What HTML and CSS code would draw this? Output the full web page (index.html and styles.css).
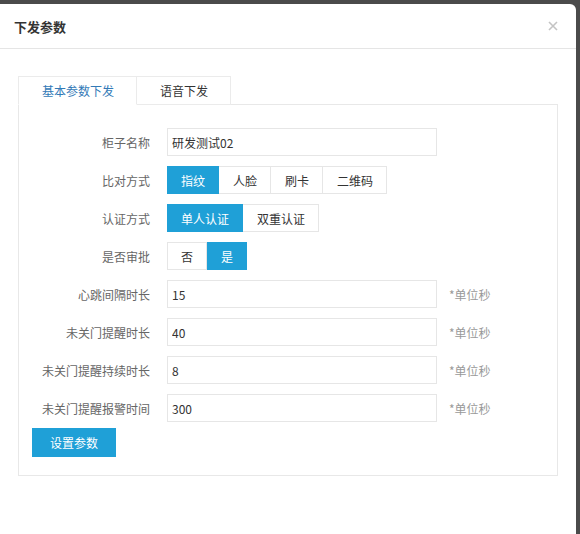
FILE: index.html
```html
<!DOCTYPE html>
<html lang="zh-CN">
<head>
<meta charset="utf-8">
<title>下发参数</title>
<link rel="stylesheet" href="styles.css">
</head>
<body>
<div class="page">
  <div class="modal">
    <div class="modal-header">
      <h4 class="title">下发参数</h4>
      <button class="close" type="button" aria-label="关闭">
        <svg width="10" height="10" viewBox="0 0 10 10"><path d="M1 1L9 9M9 1L1 9" stroke="#c4c4c4" stroke-width="1.6" fill="none"/></svg>
      </button>
    </div>
    <div class="modal-body">
      <ul class="tabs">
        <li class="tab active">基本参数下发</li>
        <li class="tab">语音下发</li>
      </ul>
      <div class="panel">
        <div class="rows">
          <div class="row"><span class="lbl">柜子名称</span><input class="field" value="研发测试02"></div>
          <div class="row"><span class="lbl">比对方式</span>
            <div class="group">
              <button class="opt on">指纹</button><button class="opt">人脸</button><button class="opt">刷卡</button><button class="opt">二维码</button>
            </div>
          </div>
          <div class="row"><span class="lbl">认证方式</span>
            <div class="group">
              <button class="opt on">单人认证</button><button class="opt">双重认证</button>
            </div>
          </div>
          <div class="row"><span class="lbl">是否审批</span>
            <div class="group">
              <button class="opt">否</button><button class="opt on">是</button>
            </div>
          </div>
          <div class="row"><span class="lbl">心跳间隔时长</span><input class="field" value="15"><span class="hint">*单位秒</span></div>
          <div class="row"><span class="lbl">未关门提醒时长</span><input class="field" value="40"><span class="hint">*单位秒</span></div>
          <div class="row"><span class="lbl">未关门提醒持续时长</span><input class="field" value="8"><span class="hint">*单位秒</span></div>
          <div class="row"><span class="lbl">未关门提醒报警时间</span><input class="field" value="300"><span class="hint">*单位秒</span></div>
        </div>
        <div class="actions"><button class="submit" type="button">设置参数</button></div>
      </div>
    </div>
  </div>
</div>
</body>
</html>
```

FILE: styles.css
```css
html, body {
  margin: 0;
  height: 100%;
}
body {
  background: #4b4b4b;
  font-family: "Noto Sans CJK SC", "Microsoft YaHei", "Noto Sans", sans-serif;
  font-size: 12px;
  color: #333;
  overflow: hidden;
}
.page {
  padding-top: 4px;
}
.modal {
  width: 576px;
  height: 530px;
  background: #fff;
  border-radius: 0 6px 0 0;
}
.modal-header {
  height: 44px;
  border-bottom: 1px solid #e5e5e5;
  display: flex;
  align-items: center;
  justify-content: space-between;
  padding: 0 18px 0 14px;
}
.title {
  margin: 0;
  font-size: 13px;
  font-weight: bold;
  color: #333;
}
.close {
  border: none;
  background: none;
  padding: 0;
  width: 10px;
  height: 10px;
  display: flex;
}
.modal-body {
  padding: 27px 18px 0 18px;
}
.tabs {
  display: flex;
  list-style: none;
  margin: 0;
  padding: 0;
  border-bottom: 1px solid #e8e8e8;
}
.tab {
  height: 27px;
  line-height: 27px;
  padding: 0 22px 0 23px;
  border: 1px solid #ebebeb;
  margin-bottom: -1px;
  color: #333;
  background: #fff;
}
.tab + .tab {
  border-left: none;
}
.tab.active {
  color: #337ab7;
  border-bottom-color: #fff;
}
.panel {
  border: 1px solid #e8e8e8;
  border-top: none;
  padding: 23px 0 18px 13px;
}
.rows {
  display: flex;
  flex-direction: column;
  gap: 10px;
}
.row {
  display: flex;
  align-items: center;
  height: 28px;
}
.lbl {
  width: 118px;
  text-align: right;
  margin-right: 17px;
  color: #666;
}
.field {
  width: 270px;
  height: 28px;
  box-sizing: border-box;
  border: 1px solid #e6e6e6;
  padding: 0 4px;
  margin: 0;
  font: inherit;
  color: #333;
  outline: none;
}
.hint {
  margin-left: 12px;
  color: #999;
}
.group {
  display: flex;
}
.opt {
  height: 28px;
  box-sizing: border-box;
  padding: 0 13px;
  margin: 0;
  border: 1px solid #e6e6e6;
  background: #fff;
  color: #333;
  font: inherit;
}
.opt + .opt {
  border-left: none;
  padding-left: 14px;
}
.opt.on {
  background: #1fa0d7;
  border-color: #1fa0d7;
  color: #fff;
}
.actions {
  margin-top: 6px;
}
.submit {
  height: 29px;
  padding: 0 18px;
  border: none;
  background: #1fa0d7;
  color: #fff;
  font: inherit;
}
```
